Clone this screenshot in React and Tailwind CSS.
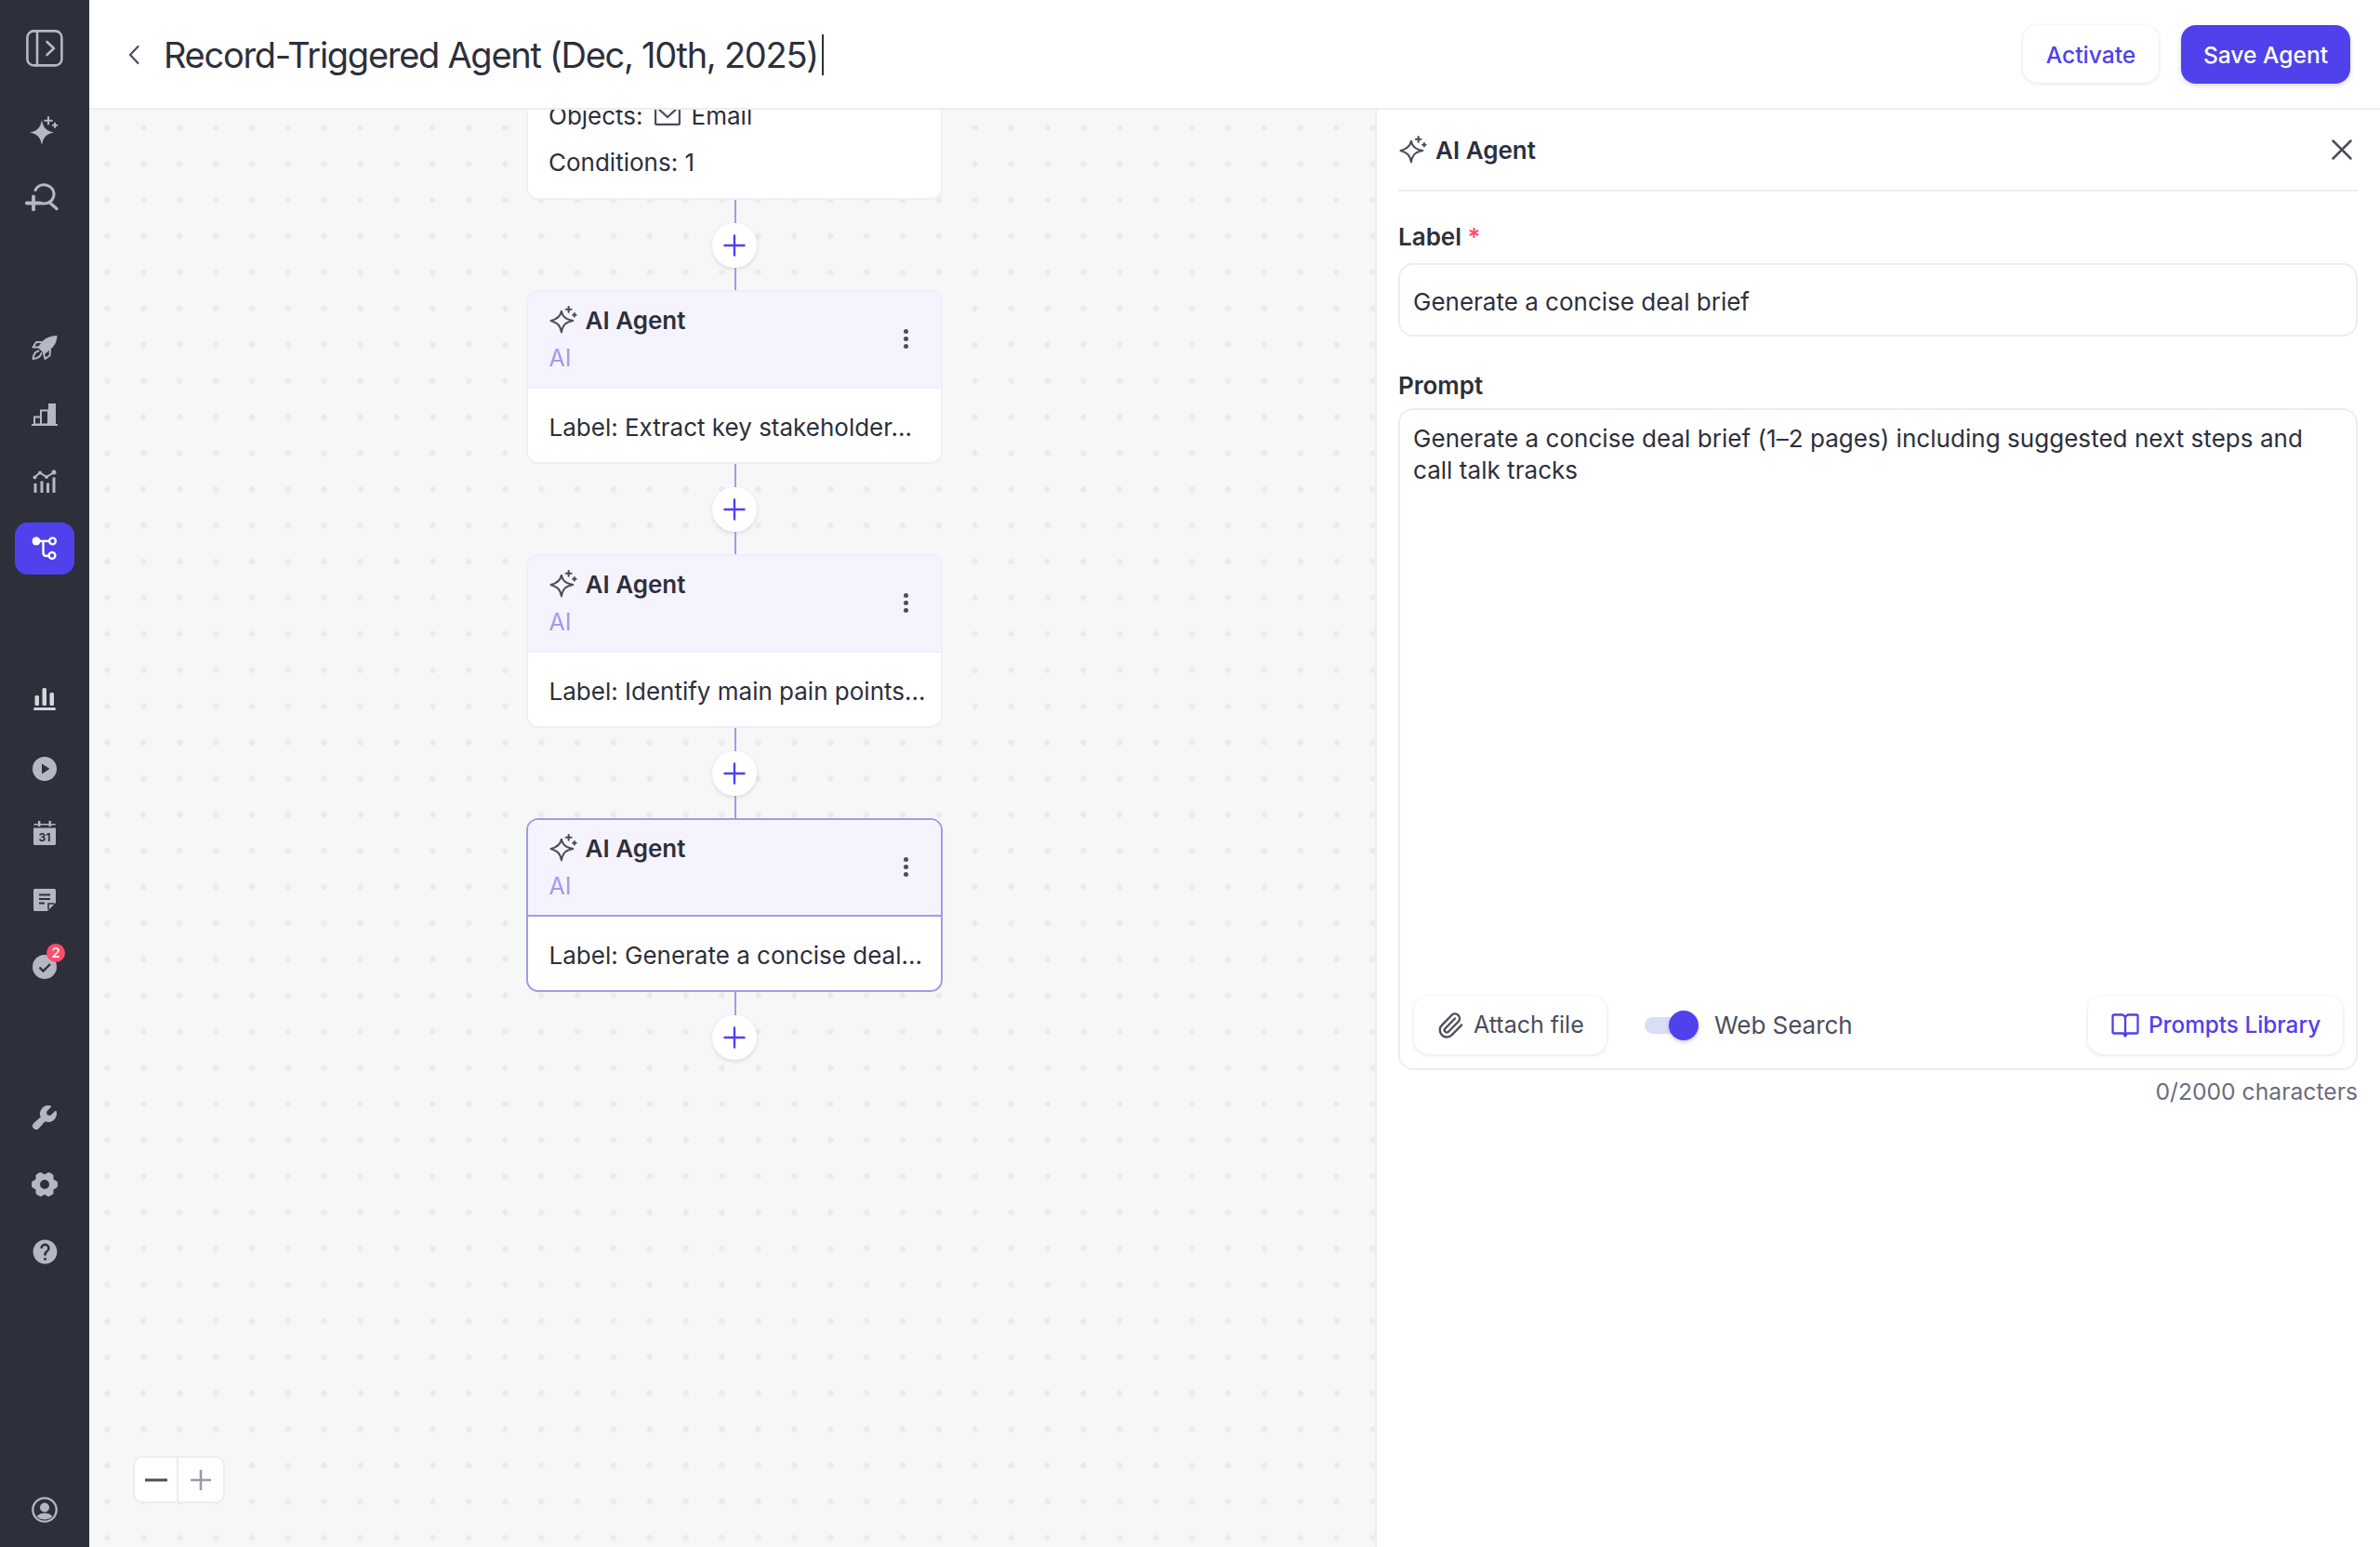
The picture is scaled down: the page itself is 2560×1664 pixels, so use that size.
import React from "react";
import { MdHelp } from "react-icons/md";
import { PiWrenchFill, PiGearSixFill } from "react-icons/pi";
import { Paperclip } from "lucide-react";

const C = "#b5b8c3";
const D = "#2d2f3b";

function Slot({ active, children }) {
  return (
    <div className={"relative flex h-[56px] w-[64px] items-center justify-center rounded-[14px] " + (active ? "bg-[#4f41ec]" : "")}>
      {children}
    </div>
  );
}

function Sparkle({ className }) {
  return (
    <svg className={className} viewBox="0 0 30 30" fill="none" stroke="currentColor" strokeWidth="2" strokeLinecap="round" strokeLinejoin="round">
      <path d="M12.5 5.5C13.6 11 16 13.8 24.5 15.5C16.5 17 13.8 20 12.5 27.5C11.2 20 8 17.5 1.5 15.5C8 13.8 11.4 11 12.5 5.5Z" />
      <path d="M20 1v5.5M17.2 3.7h5.6M26 7.8v3.4M24.3 9.5h3.4" />
    </svg>
  );
}

function PlusBtn() {
  return (
    <div className="flex h-[48px] w-[48px] items-center justify-center rounded-full bg-white shadow-[0_2px_4px_rgba(45,47,59,0.14)]">
      <svg width="24" height="24" viewBox="0 0 24 24" stroke="#4f41ec" strokeWidth="2.4" strokeLinecap="round">
        <path d="M12 1.5v21M1.5 12h21" />
      </svg>
    </div>
  );
}

function Connector({ last }) {
  return (
    <div className="flex flex-col items-center">
      <div className="ml-[2px] h-[25px] w-[2px] bg-[#a09ce8]" />
      <PlusBtn />
      {!last && <div className="ml-[2px] h-[24px] w-[2px] bg-[#a09ce8]" />}
    </div>
  );
}

function AgentCard({ label, selected }) {
  const line = selected ? "border-[#a09ce8]" : "border-[#f0eefb]";
  return (
    <div className={"w-[448px] overflow-hidden rounded-[13px] border-2 bg-white " + line}>
      <div className={"relative flex h-[104px] flex-col border-b-2 bg-[#f5f3fe] pl-[22.5px] pt-[10px] " + line}>
        <div className="flex h-[40px] items-center gap-[8px] text-[26px] font-semibold text-[#2d2f3b]">
          <Sparkle className="h-[31px] w-[31px] text-[#4a4d5c]" />
          <span>AI Agent</span>
        </div>
        <div className="mt-[2px] text-[25px] leading-[38px] text-[#a09ce8]">AI</div>
        <div className="absolute right-[35px] top-[40px] flex flex-col gap-[2.4px]">
          <span className="h-[5.4px] w-[5.4px] rounded-full bg-[#4a4d5c]" />
          <span className="h-[5.4px] w-[5.4px] rounded-full bg-[#4a4d5c]" />
          <span className="h-[5.4px] w-[5.4px] rounded-full bg-[#4a4d5c]" />
        </div>
      </div>
      <div className="flex h-[79px] items-center whitespace-nowrap pl-[22.5px] pt-[3px] text-[26px] text-[#2d2f3b]">{label}</div>
    </div>
  );
}

function Sidebar() {
  return (
    <aside className="flex h-full w-[96px] shrink-0 flex-col items-center bg-[#2d2f3b] pt-[24px] pb-[12px]">
      <Slot>
        <svg width="40" height="40" viewBox="0 0 40 40" fill="none" stroke={C} strokeWidth="2.6" strokeLinecap="round" strokeLinejoin="round">
          <rect x="1.4" y="1.4" width="37" height="37" rx="7" />
          <path d="M12 1.4v37M22.5 13l7.5 7-7.5 7" />
        </svg>
      </Slot>
      <div className="mt-[33px] flex flex-col gap-[15px]">
        <Slot>
          <svg width="32" height="32" viewBox="0 0 32 32" fill={C} stroke={C} strokeLinecap="round">
            <path stroke="none" d="M13 4C14.6 12 17 15.6 26 17.500C17 19.400 14.600 23 13 31C11.400 23 9 19.400 0 17.500C9 15.600 11.400 12 13 4Z" />
            <path fill="none" strokeWidth="2" d="M20 1v7.500M16.300 4.700h7.500M27 7.500v4.500M24.800 9.800h4.500" />
          </svg>
        </Slot>
        <Slot>
          <svg className="mr-[6px]" width="36" height="30" viewBox="0 0 36 30" fill="none" stroke={C} strokeWidth="3" strokeLinecap="round">
            <path d="M11 7.500C13 3.500 16.500 1.700 20 1.700C26.500 1.700 31 6.500 31 12C31 17 27 22 20 22C19 22 18 21.900 17 21.500" />
            <path d="M27 21.500L34 27.500" strokeWidth="3.400" />
            <path d="M1.800 21.500h14.400M9 14.500v14" strokeWidth="3.800" />
          </svg>
        </Slot>
      </div>
      <div className="mt-[106px] flex flex-col gap-[16px]">
        <Slot>
          <svg width="28" height="28" viewBox="0 0 28 28" fill="none" stroke={C} strokeWidth="2" strokeLinejoin="round" strokeLinecap="round">
            <path fill={C} stroke="none" d="M27.500 1C20 1.200 14.500 3.600 10.500 8.500L6.500 13.500L14 21L19.500 16.500C24.500 12.500 27 8.500 27.500 1Z" />
            <path d="M11 8H5L1.500 13.500H7.500M20 16.500L19.500 22.500L14.500 26L13 20" />
            <path d="M7.500 17.500C4 18 2 21 1.500 26C6.500 25.500 9.500 23.500 10.500 20" />
          </svg>
        </Slot>
        <Slot>
          <svg width="28" height="24" viewBox="0 0 28 24" fill="none" stroke={C} strokeWidth="2">
            <path d="M0 23h28" />
            <rect x="3" y="14.500" width="7" height="8" />
            <rect x="10" y="7.500" width="8" height="15" />
            <rect x="18" y="0" width="8" height="23" fill={C} stroke="none" />
          </svg>
        </Slot>
        <Slot>
          <svg width="26" height="26" viewBox="0 0 26 26" fill="none" stroke={C}>
            <path d="M2 8.500L8 3.500L15 8L24 2.500" strokeWidth="2" />
            <circle cx="2.500" cy="8.500" r="2" fill={C} stroke="none" />
            <circle cx="8" cy="3.500" r="2" fill={C} stroke="none" />
            <circle cx="15" cy="8" r="2" fill={C} stroke="none" />
            <circle cx="23" cy="3" r="2.500" fill={C} stroke="none" />
            <path d="M3 15v10M10 12.500v12.500M16.500 14.500v10.500M23 8.500v16.500" strokeWidth="3" />
          </svg>
        </Slot>
        <Slot active>
          <svg width="28" height="28" viewBox="0 0 28 28" fill="none" stroke="#fff" strokeWidth="2.400">
            <circle cx="5" cy="6" r="4.500" fill="#fff" stroke="none" />
            <path d="M5 6h14.500M12.500 6v12.500c0 2 1 3.500 3.500 3.500h2.500" />
            <circle cx="22.500" cy="6" r="3.400" />
            <circle cx="22" cy="21.500" r="3.400" />
          </svg>
        </Slot>
      </div>
      <div className="mt-[106px] flex flex-col gap-[16px]">
        <Slot>
          <svg width="24" height="24" viewBox="0 0 24 24" fill="#d5d7de">
            <rect x="1.500" y="8" width="4.500" height="11" rx="1.500" />
            <rect x="9.500" y="0" width="4.500" height="19" rx="1.500" />
            <rect x="17.500" y="5" width="4.500" height="14" rx="1.500" />
            <rect x="0" y="21" width="24" height="3" rx="1.500" />
          </svg>
        </Slot>
        <Slot>
          <svg className="mt-[6px]" width="26" height="26" viewBox="0 0 26 26">
            <circle cx="13" cy="13" r="13" fill={C} />
            <path d="M10 7.500L18.500 13L10 18.500Z" fill={D} />
          </svg>
        </Slot>
        <Slot>
          <svg width="24" height="26" viewBox="0 0 24 26">
            <path d="M1.500 3H22.500Q24 3 24 4.500V24.500Q24 26 22.500 26H1.500Q0 26 0 24.500V4.500Q0 3 1.500 3Z" fill={C} />
            <rect x="0" y="4.500" width="24" height="3" fill={D} />
            <rect x="5" y="0" width="2.400" height="6" fill={C} />
            <rect x="16.500" y="0" width="2.400" height="6" fill={C} />
            <text x="12" y="22" textAnchor="middle" fontFamily="Inter, sans-serif" fontWeight="700" fontSize="12" fill={D}>31</text>
          </svg>
        </Slot>
        <Slot>
          <svg width="24" height="24" viewBox="0 0 24 24">
            <path d="M1.500 0H22.500Q24 0 24 1.500V15L15 24H1.500Q0 24 0 22.500V1.500Q0 0 1.500 0Z" fill={C} />
            <path d="M6 6.500h12M6 11h12M6 15.500h6" stroke={D} strokeWidth="2" />
            <path d="M16 22.500V16H22.500" fill="none" stroke={D} strokeWidth="1.600" />
          </svg>
        </Slot>
        <Slot>
          <svg width="26" height="26" viewBox="0 0 26 26">
            <circle cx="13" cy="13" r="13" fill={C} />
            <path d="M7.500 13.500L11.500 17.500L19 10" fill="none" stroke={D} strokeWidth="2.400" />
          </svg>
          <span className="absolute left-[34px] top-[3px] flex h-[20px] w-[20px] items-center justify-center rounded-full bg-[#ff4d6d] text-[15px] font-medium text-white">2</span>
        </Slot>
      </div>
      <div className="mt-[106px] flex flex-col gap-[16px]">
        <Slot><PiWrenchFill size={32} color={C} /></Slot>
        <Slot><PiGearSixFill size={32} color={C} /></Slot>
        <Slot><MdHelp size={31} color={C} /></Slot>
      </div>
      <div className="mt-auto">
        <Slot>
          <svg width="28" height="28" viewBox="0 0 28 28" fill="none">
            <circle cx="14" cy="14" r="12.700" stroke={C} strokeWidth="2.300" />
            <circle cx="14" cy="11.500" r="5" fill={C} />
            <path d="M5.500 21C8 18.500 10.500 17.500 14 17.500C17.500 17.500 20 18.500 22.500 21C20 23.500 17.500 24.500 14 24.500C10.500 24.500 8 23.500 5.500 21Z" fill={C} />
          </svg>
        </Slot>
      </div>
    </aside>
  );
}

function Header() {
  return (
    <header className="flex h-[118px] shrink-0 items-center border-b-2 border-[#ecedf3] bg-white pl-[41px] pr-[32px]">
      <svg className="mt-[2px]" width="14" height="22" viewBox="0 0 14 22" fill="none" stroke="#4a4d5c" strokeWidth="2.200" strokeLinecap="round" strokeLinejoin="round">
        <path d="M11.500 2L3 11l8.500 9" />
      </svg>
      <h1 className="ml-[25px] mt-[2px] text-[38px] font-normal leading-[46px] tracking-[-1.28px] text-[#2d2f3b]">Record-Triggered Agent (Dec, 10th, 2025)</h1>
      <span className="ml-[4px] mt-[2px] h-[44px] w-[2.500px] bg-[#2d2f3b]" />
      <div className="ml-auto flex items-center gap-[24px]">
        <button className="flex h-[62px] w-[146px] items-center justify-center rounded-[16px] bg-white pt-[2px] text-[24.6px] font-medium text-[#4f41ec] shadow-[0_1px_4px_rgba(45,47,59,0.14)]">Activate</button>
        <button className="flex h-[63px] w-[182px] items-center justify-center rounded-[16px] bg-[#4f41ec] pt-[2px] text-[24.6px] font-medium text-white shadow-[0_2px_5px_rgba(45,47,59,0.2)]">Save Agent</button>
      </div>
    </header>
  );
}

function Canvas() {
  return (
    <main className="relative min-w-0 flex-1 overflow-hidden bg-[#f6f8f8] bg-[radial-gradient(circle,#e9ebef_3px,transparent_3.500px)] bg-[length:38.900px_38.900px]">
      <div className="-mt-[36px] ml-[470px] flex w-[448px] flex-col items-center">
        <div className="flex w-[448px] flex-col rounded-[13px] border-2 border-[#f0eefb] bg-white pb-[14px] pl-[22px] pt-[15px] text-[26px] text-[#2d2f3b]">
          <div className="flex h-[50px] items-center">
            <span>Objects:</span>
            <svg className="ml-[12px]" width="28" height="22" viewBox="0 0 28 22" fill="none" stroke="#4a4d5c" strokeWidth="2.200">
              <rect x="1.100" y="1.100" width="25.800" height="19.800" rx="1" />
              <path d="M1.100 1.100L14 13L26.900 1.100" />
            </svg>
            <span className="ml-[12px]">Email</span>
          </div>
          <div className="flex h-[50px] items-center">Conditions: 1</div>
        </div>
        <Connector />
        <AgentCard label="Label: Extract key stakeholder..." />
        <Connector />
        <AgentCard label="Label: Identify main pain points..." />
        <Connector />
        <AgentCard label="Label: Generate a concise deal..." selected />
        <Connector last />
      </div>
      <div className="absolute bottom-[47px] left-[47px] flex h-[51px] w-[99px] overflow-hidden rounded-[10px] border-2 border-[#ecedf3] bg-white">
        <div className="flex flex-1 items-center justify-center border-r-2 border-[#ecedf3]">
          <svg width="24" height="4"><rect width="24" height="3" y="0.500" fill="#4a4d5c" /></svg>
        </div>
        <div className="flex w-[48px] items-center justify-center">
          <svg width="24" height="24" viewBox="0 0 24 24" stroke="#9a9ba5" strokeWidth="2.600"><path d="M12 1v22M1 12h22" /></svg>
        </div>
      </div>
    </main>
  );
}

function Panel() {
  return (
    <section className="flex w-[1081px] shrink-0 flex-col border-l-2 border-[#ecedf3] bg-white pl-[23px] pr-[24px]">
      <div className="flex h-[88px] shrink-0 items-center border-b-2 border-[#ecedf3]">
        <Sparkle className="ml-[1px] h-[31px] w-[31px] text-[#4a4d5c]" />
        <span className="ml-[8px] text-[26px] font-semibold text-[#2d2f3b]">AI Agent</span>
        <svg className="ml-auto mr-[6px]" width="22" height="22" viewBox="0 0 22 22" stroke="#4a4d5c" strokeWidth="2.500" strokeLinecap="round">
          <path d="M1.500 1.500l19 19M20.500 1.500l-19 19" />
        </svg>
      </div>
      <label className="mt-[29px] text-[26px] font-semibold leading-[40px] text-[#2d2f3b]">
        Label <span className="text-[#ff4d6d]">*</span>
      </label>
      <div className="mt-[8px] flex h-[79px] items-center rounded-[16px] border-2 border-[#ecedf3] pl-[14px] pt-[4px] text-[26px] text-[#2d2f3b]">Generate a concise deal brief</div>
      <label className="mt-[33px] text-[26px] font-semibold leading-[40px] text-[#2d2f3b]">Prompt</label>
      <div className="mt-[4px] flex h-[712px] flex-col rounded-[16px] border-2 border-[#ecedf3] pb-[15px] pl-[14px] pr-[14px] pt-[14px]">
        <p className="text-[26px] leading-[34px] tracking-[0.04px] text-[#2d2f3b]">Generate a concise deal brief (1–2 pages) including suggested next steps and call talk tracks</p>
        <div className="mt-auto flex items-center">
          <button className="ml-[1px] flex h-[63px] w-[207px] items-center rounded-[16px] bg-white pl-[24px] text-[25px] text-[#4a4d5c] shadow-[0_1px_4px_rgba(45,47,59,0.14)]">
            <Paperclip size={30} strokeWidth={1.9} color="#4a4d5c" />
            <span className="ml-[10px]">Attach file</span>
          </button>
          <div className="relative ml-[41px] h-[18px] w-[48px] rounded-full bg-[#d9ddf6]">
            <span className="absolute -top-[7px] left-[26px] h-[32px] w-[32px] rounded-full bg-[#4f41ec] shadow-[0_2px_4px_rgba(45,47,59,0.25)]" />
          </div>
          <span className="ml-[27px] text-[26px] tracking-[-0.03px] text-[#4a4d5c]">Web Search</span>
          <button className="ml-auto flex h-[63px] w-[274px] items-center rounded-[16px] bg-white pl-[25px] text-[24.3px] font-medium text-[#4f41ec] shadow-[0_1px_4px_rgba(45,47,59,0.14)]">
            <svg width="30" height="26" viewBox="0 0 30 26" fill="none" stroke="#4f41ec" strokeWidth="2.300" strokeLinejoin="round" strokeLinecap="round">
              <path d="M15 5.500C15 3 13 1.500 11 1.500H3C2 1.500 1.500 2 1.500 3V20C1.500 21 2 21.500 3 21.500H13L15 24.500L17 21.500H27C28 21.500 28.500 21 28.500 20V3C28.500 2 28 1.500 27 1.500H19C17 1.500 15 3 15 5.500ZM15 5.500V21" />
            </svg>
            <span className="ml-[10px]">Prompts Library</span>
          </button>
        </div>
      </div>
      <div className="mt-[7px] text-right text-[24.7px] leading-[32px] text-[#6b6d80]">0/2000 characters</div>
    </section>
  );
}

export default function App() {
  return (
    <div className="flex h-[1664px] w-[2560px] overflow-hidden bg-white font-['Inter',sans-serif]">
      <Sidebar />
      <div className="flex min-w-0 flex-1 flex-col">
        <Header />
        <div className="flex min-h-0 flex-1">
          <Canvas />
          <Panel />
        </div>
      </div>
    </div>
  );
}
